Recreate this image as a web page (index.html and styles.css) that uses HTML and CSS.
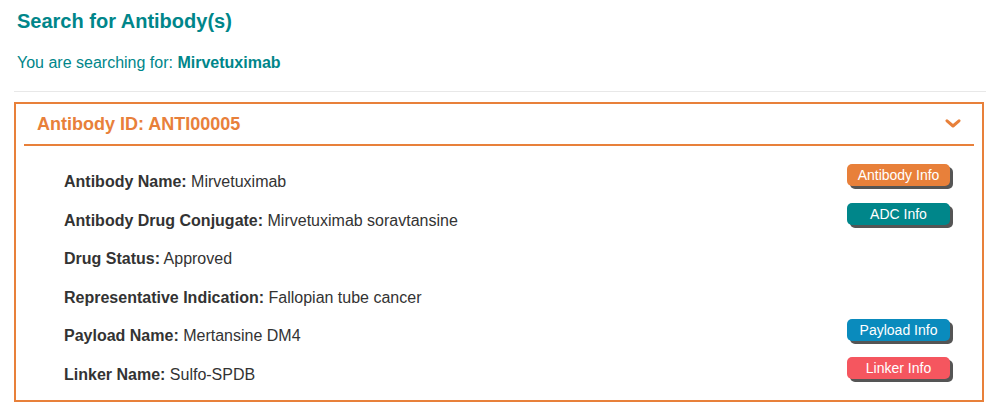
FILE: index.html
```html
<!DOCTYPE html>
<html>
<head>
<meta charset="utf-8">
<link rel="stylesheet" href="styles.css">
</head>
<body>
<div class="page">
  <h2 class="title">Search for Antibody(s)</h2>
  <p class="searching">You are searching for: <strong>Mirvetuximab</strong></p>
  <hr class="divider">
  <div class="card">
    <div class="card-header">
      <span class="card-title">Antibody ID: ANTI00005</span>
      <svg class="chevron" width="16" height="9" viewBox="0 0 16 9"><path d="M2 1.8 L8 7 L14 1.8" fill="none" stroke="#e8803a" stroke-width="3" stroke-linecap="round" stroke-linejoin="round"/></svg>
    </div>
    <div class="card-body">
      <div class="row">
        <p class="field"><b>Antibody Name:</b> Mirvetuximab</p>
        <button class="btn btn-orange">Antibody Info</button>
      </div>
      <div class="row">
        <p class="field"><b>Antibody Drug Conjugate:</b> Mirvetuximab soravtansine</p>
        <button class="btn btn-teal">ADC Info</button>
      </div>
      <div class="row">
        <p class="field"><b>Drug Status:</b> Approved</p>
      </div>
      <div class="row">
        <p class="field"><b>Representative Indication:</b> Fallopian tube cancer</p>
      </div>
      <div class="row">
        <p class="field"><b>Payload Name:</b> Mertansine DM4</p>
        <button class="btn btn-blue">Payload Info</button>
      </div>
      <div class="row">
        <p class="field"><b>Linker Name:</b> Sulfo-SPDB</p>
        <button class="btn btn-red">Linker Info</button>
      </div>
    </div>
  </div>
</div>
</body>
</html>
```

FILE: styles.css
```css
html, body {
  margin: 0;
  padding: 0;
  background: #ffffff;
}
body {
  font-family: "Liberation Sans", Arial, sans-serif;
  color: #333333;
}
.page {
  padding: 10px 14px 0 14px;
}
.title {
  margin: 0;
  font-size: 20px;
  line-height: 23px;
  font-weight: bold;
  color: #00868a;
  padding-left: 3px;
}
.searching {
  margin: 21px 0 0 0;
  font-size: 16px;
  line-height: 18px;
  color: #00868a;
  padding-left: 3px;
}
.searching strong {
  font-weight: bold;
}
.divider {
  margin: 19px 0 0 0;
  border: 0;
  border-top: 1px solid #e8e8e8;
  height: 0;
}
.card {
  margin: 10px 2px 0 0;
  border: 2px solid #e8803a;
}
.card-header {
  margin: 0 8px;
  padding: 0 13px;
  height: 40px;
  display: flex;
  align-items: center;
  justify-content: space-between;
  border-bottom: 2px solid #e8803a;
}
.card-title {
  font-size: 18px;
  font-weight: bold;
  color: #e8803a;
}
.chevron {
  display: block;
  margin-top: -2px;
}
.card-body {
  padding: 14.7px 32px 8px 48px;
}
.row {
  height: 38.6px;
  display: flex;
  justify-content: space-between;
  align-items: center;
}
.field {
  margin: 0;
  padding-top: 4px;
  font-size: 16px;
  line-height: 18px;
  color: #333333;
}
.field b {
  font-weight: bold;
}
.btn {
  align-self: flex-start;
  margin-top: 3.5px;
  width: 103px;
  height: 22px;
  padding: 0;
  border: 0;
  border-radius: 5px;
  box-shadow: 3px 3px 0 #555555;
  color: #ffffff;
  font-family: "Liberation Sans", Arial, sans-serif;
  font-size: 14px;
  line-height: 22px;
  text-align: center;
}
.btn-orange { background: #e8803a; }
.btn-teal { background: #00868a; }
.btn-blue { background: #0a8bbd; }
.btn-red { background: #f5565f; }
```
